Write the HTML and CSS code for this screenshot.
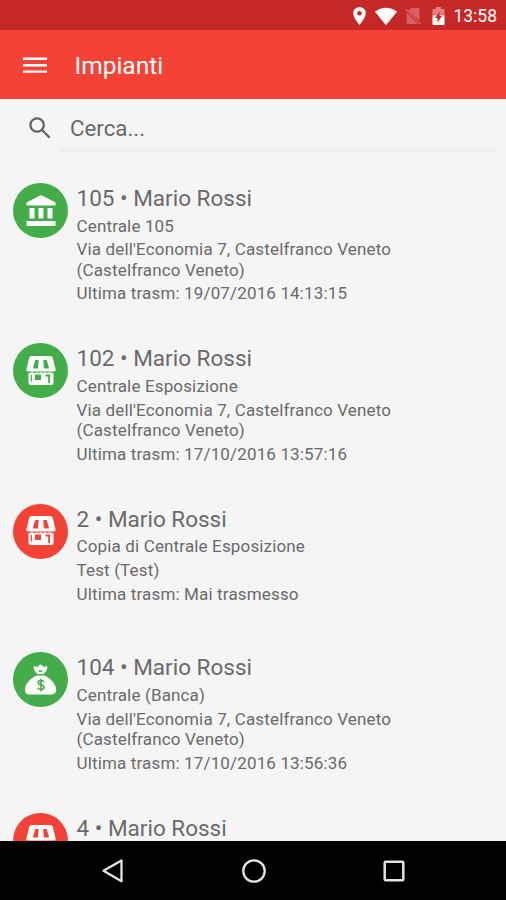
FILE: index.html
```html
<!DOCTYPE html>
<html lang="it">
<head>
    <meta charset="utf-8">
    <meta name="viewport" content="width=device-width, initial-scale=1.0">
    <title>Impianti</title>
    <link rel="stylesheet" href="styles.css">
</head>
<body>
    <!-- shared icons -->
    <svg class="defs" width="0" height="0">
        <symbol id="shop" viewBox="0 0 32 32">
            <path fill="#fff" d="M6.500 1h19q1.700 0 2.200 1.500l2.800 11.500q.5 2.500-1.500 2.500h-26q-2 0-1.500-2.500L4.300 2.500Q4.800 1 6.500 1zM3.500 18q2 .5 3.500-1 3 2 5 0 2 2 4 0 2 2 4 0 2 2 5 0 1.500 1.500 3.500 1v9.500q0 2.500-2.500 2.500h-20q-2.500 0-2.500-2.500z"/>
            <path class="cut" d="M10.300 5h3.400l-.7 8.500h-4.600q-.6 0-.4-.8zM18.300 5h3.400L24 12.700q.2.800-.4.800H19zM10 19.500h6v5.500h-6zM20.500 19.500h4.500v8.500h-1.800v-6.500h-2.700zM5.800 20h1.200v6.500h-1.200z"/>
        </symbol>
    </svg>

    <div class="statusbar">
        <svg class="pin" width="13" height="18" viewBox="0 0 13 18"><path fill="#fff" fill-rule="evenodd" d="M6.500 0A6.300 6.300 0 0 0 .2 6.300C.2 11 6.500 18 6.500 18s6.300-7 6.300-11.700A6.300 6.300 0 0 0 6.500 0zm0 4a2.300 2.300 0 1 1 0 4.600 2.300 2.300 0 0 1 0-4.600z"/></svg>
        <svg class="wifi" width="24" height="19" viewBox="0 0 24 19"><path fill="#fff" d="M12 18.300L.8 4.600Q12-3.200 23.200 4.600z"/></svg>
        <svg class="sim" width="18" height="18" viewBox="0 0 18 18"><path fill="#da6060" d="M7 1h7q1.500 0 1.500 1.500v11L4 3.800zM2.500 5.500L14 17H4q-1.500 0-1.500-1.500z"/><path stroke="#da6060" stroke-width="1.500" d="M1.500 2l15 15"/></svg>
        <svg class="battery" width="13" height="18" viewBox="0 0 13 18"><path fill="#e08080" d="M4 0h5v2h2.500q1 0 1 1v6H.5V3q0-1 1-1H4z"/><path fill="#fff" d="M.5 8.500h12V17q0 1-1 1h-10q-1 0-1-1z"/><path fill="#c62828" d="M7.500 4.500v4.500h2.500l-4.500 6.500v-4.500H3z"/></svg>
        <span class="time">13:58</span>
    </div>

    <div class="toolbar">
        <svg width="24" height="16" viewBox="0 0 24 16"><path stroke="#fff" stroke-width="2.400" d="M0 1.800h24M0 8.200h24M0 14.600h24"/></svg>
        <h1>Impianti</h1>
    </div>

    <div class="content">
        <div class="search">
            <svg width="22" height="22" viewBox="0 0 22 22"><path fill="none" stroke="#626262" stroke-width="2.300" d="M14.800 8a6.700 6.700 0 1 1-13.400 0 6.700 6.700 0 0 1 13.400 0zM12.800 12.800l7.900 7.900"/></svg>
            <div class="search-input">Cerca...</div>
        </div>

        <div class="item">
            <div class="avatar green">
                <svg width="30" height="32" viewBox="0 0 30 32"><path fill="#fff" d="M15 0L29.500 7.500V10.500H.5V7.500zM3.500 13h5V23.500h-5zM12.500 13h5V23.500h-5zM21.500 13h5V23.500h-5zM.5 26h29v5H.5z"/></svg>
            </div>
            <div class="info">
                <h2>105 • Mario Rossi</h2>
                <p>Centrale 105</p>
                <p>Via dell'Economia 7, Castelfranco Veneto (Castelfranco Veneto)</p>
                <p>Ultima trasm: 19/07/2016 14:13:15</p>
            </div>
        </div>

        <div class="item">
            <div class="avatar green"><svg width="32" height="32"><use href="#shop"/></svg></div>
            <div class="info">
                <h2>102 • Mario Rossi</h2>
                <p>Centrale Esposizione</p>
                <p>Via dell'Economia 7, Castelfranco Veneto (Castelfranco Veneto)</p>
                <p>Ultima trasm: 17/10/2016 13:57:16</p>
            </div>
        </div>

        <div class="item">
            <div class="avatar red"><svg width="32" height="32"><use href="#shop"/></svg></div>
            <div class="info">
                <h2>2 • Mario Rossi</h2>
                <p>Copia di Centrale Esposizione</p>
                <p>Test (Test)</p>
                <p>Ultima trasm: Mai trasmesso</p>
            </div>
        </div>

        <div class="item">
            <div class="avatar green">
                <svg width="32" height="32" viewBox="0 0 32 32">
                    <path fill="#fff" d="M8.500 2.500q2.500-.8 4 .8 1-2.300 3-2.800 2 .5 3 2.800 1.500-1.600 4-.8-.5 4.500-4 7.500h-6q-3.500-3-4-7.500zM11.500 11.500h8q7 3 10.500 9.500 3.500 9-3.500 9.500H4.500q-7-.5-3.500-9.500 3.500-6.500 10.500-9.500z"/>
                    <path class="cut" d="M13.500 5.500l2 1.200 2.200-1.200-1 2.500h-2.400z"/>
                    <path class="dollar" d="M19 18q-1-1.500-3-1.500-2.800 0-2.800 2.200 0 1.600 2.800 2.200 3 .6 3 2.300 0 2.300-3 2.300-2.200 0-3.200-1.600M16 14.700v12.600"/>
                </svg>
            </div>
            <div class="info">
                <h2>104 • Mario Rossi</h2>
                <p>Centrale (Banca)</p>
                <p>Via dell'Economia 7, Castelfranco Veneto (Castelfranco Veneto)</p>
                <p>Ultima trasm: 17/10/2016 13:56:36</p>
            </div>
        </div>

        <div class="item">
            <div class="avatar red"><svg width="32" height="32"><use href="#shop"/></svg></div>
            <div class="info">
                <h2>4 • Mario Rossi</h2>
            </div>
        </div>
    </div>

    <div class="navbar">
        <svg width="24" height="26" viewBox="0 0 24 26"><path fill="none" stroke="#e4e4e4" stroke-width="2.300" stroke-linejoin="round" d="M2.500 12.800L20.500 2.500v20.800z"/></svg>
        <svg width="26" height="26" viewBox="0 0 26 26"><circle cx="13" cy="13" r="10.700" fill="none" stroke="#e4e4e4" stroke-width="2.300"/></svg>
        <svg width="22" height="22" viewBox="0 0 22 22"><rect x="1.700" y="1.700" width="18.600" height="18.600" rx="1" fill="none" stroke="#e4e4e4" stroke-width="2.500"/></svg>
    </div>
</body>
</html>
```
FILE: styles.css
```css
body {
    margin: 0;
    height: 900px;
    display: flex;
    flex-direction: column;
    overflow: hidden;
    background-color: #f5f5f5;
    color: #6a6a6a;
    font-family: Roboto, sans-serif;
}
h1, h2, p {
    margin: 0;
    font-weight: 400;
}
svg {
    display: block;
    flex-shrink: 0;
}
.defs {
    position: absolute;
}
.statusbar {
    display: flex;
    align-items: center;
    justify-content: flex-end;
    flex-shrink: 0;
    height: 30px;
    box-sizing: border-box;
    padding: 2px 9px 0 0;
    background-color: #c62828;
    color: #fff;
}
.wifi {
    margin-left: 8px;
}
.sim {
    margin-left: 6px;
}
.battery {
    margin-left: 10px;
}
.time {
    margin-left: 8px;
    font-size: 17.5px;
}
.toolbar {
    display: flex;
    align-items: center;
    flex-shrink: 0;
    height: 69px;
    padding-left: 23px;
    background-color: #f44336;
    color: #fff;
}
.toolbar h1 {
    margin: 2px 0 0 27.5px;
    font-size: 24.5px;
}
.content {
    flex: 1;
    min-height: 0;
    overflow: hidden;
}
.search {
    display: flex;
    align-items: center;
    height: 53px;
    margin-bottom: 31px;
    padding: 0 10px 0 29px;
}
.search svg {
    margin-top: 4px;
}
.search-input {
    flex: 1;
    height: 53px;
    box-sizing: border-box;
    margin-left: 9px;
    padding: 6px 0 0 10px;
    border-bottom: 4px solid #eee;
    font-size: 22.3px;
    line-height: 47px;
}
.item {
    display: flex;
    box-sizing: border-box;
    min-height: 148.3px;
    padding: 0 14px 36.4px 13px;
}
.avatar {
    display: flex;
    align-items: center;
    justify-content: center;
    flex-shrink: 0;
    width: 55px;
    height: 55px;
    border-radius: 50%;
}
/* --cut is the colour of the holes inside the white icons */
.green {
    --cut: #43ad4a;
    background-color: #43ad4a;
}
.red {
    --cut: #f44336;
    background-color: #f44336;
}
.cut {
    fill: var(--cut);
}
.dollar {
    fill: none;
    stroke: var(--cut);
    stroke-width: 1.6;
}
.info {
    width: 340px;
    margin-left: 8.5px;
}
.info h2 {
    margin-bottom: 1.5px;
    font-size: 22.5px;
    line-height: 31px;
}
.info p {
    margin-bottom: 3.6px;
    font-size: 17px;
    letter-spacing: 0.15px;
    line-height: 20.2px;
}
.navbar {
    display: flex;
    align-items: center;
    flex-shrink: 0;
    height: 59px;
    padding-left: 101px;
    gap: 116px;
    background-color: #000;
}
```
